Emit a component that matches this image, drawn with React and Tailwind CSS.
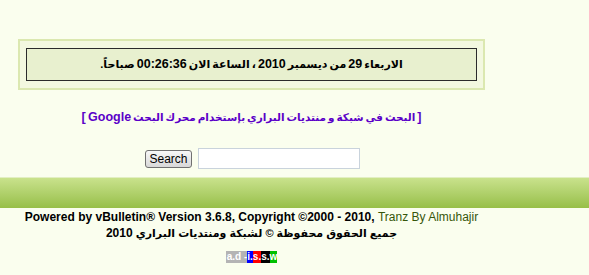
import React from "react";

function App() {
  return (
    <div className="min-h-[275px] w-full bg-[#fafeee] font-['Liberation_Sans','DejaVu_Sans',sans-serif] text-black">
      <div className="pt-[39px] pl-[18px] w-[485px]">
        <div className="border-2 border-[#dbe8b0] bg-[#f3f8e0] px-[6px] py-[7px]">
          <div
            dir="rtl"
            className="border border-[#2b2b2b] bg-[#e8f0cf] h-[33px] flex items-center justify-center text-[11px] font-bold [word-spacing:-1px]"
          >
            <span>
              الاربعاء <span className="text-[12.5px]">29</span> من ديسمبر{" "}
              <span className="text-[12.5px]">2010</span> ، الساعة الان{" "}
              <span className="text-[12.5px]">00:26:36</span> صباحاً.
            </span>
          </div>
        </div>
      </div>

      <div className="w-[503px] flex justify-center pt-[19px]">
        <a
          dir="rtl"
          href="#"
          className="text-[10.5px] leading-[16px] font-bold text-[#5a00c8] no-underline [word-spacing:-1px]"
        >
          <span className="text-[12.5px]">[</span> البحث في شبكة و منتديات البراري بإستخدام محرك البحث{" "}
          <span className="text-[12.5px]">Google ]</span>
        </a>
      </div>

      <div className="flex items-center pl-[145px] pt-[23px] gap-[6px]">
        <button className="w-[47px] h-[18px] rounded-[3px] border border-[#707070] bg-gradient-to-b from-[#f8f8f8] to-[#d8d8d8] text-[12px] leading-none text-black">
          Search
        </button>
        <input
          type="text"
          className="w-[162px] h-[21px] border border-[#c9d3dc] bg-white outline-none"
        />
      </div>

      <div className="mt-[8px] h-[31px] border-t border-[#e2efc2] bg-gradient-to-b from-[#c9e28c] to-[#97bf47]" />

      <div className="w-[503px] flex flex-col items-center text-[12px] font-bold leading-[16px] pt-[1px]">
        <div className="whitespace-nowrap">
          Powered by vBulletin® Version 3.6.8, Copyright ©2000 - 2010,{" "}
          <span className="font-normal text-[#36560a]">Tranz By Almuhajir</span>
        </div>
        <div dir="rtl" className="text-[11px]">
          جميع الحقوق محفوظة © لشبكة ومنتديات البراري <span className="text-[12px]">2010</span>
        </div>
      </div>

      <div className="flex justify-center w-[503px] pt-[10px] pb-[12px]">
        <div className="flex text-[10px] leading-[12px] font-bold text-white">
          <span className="bg-[#b4b4b4] pl-[1px]">a.d - </span>
          <span className="bg-[#0000ff]">i.</span>
          <span className="bg-[#ff0000]">s.</span>
          <span className="bg-[#000000]">s.</span>
          <span className="bg-[#00c000]">w</span>
        </div>
      </div>
    </div>
  );
}

export default App;
